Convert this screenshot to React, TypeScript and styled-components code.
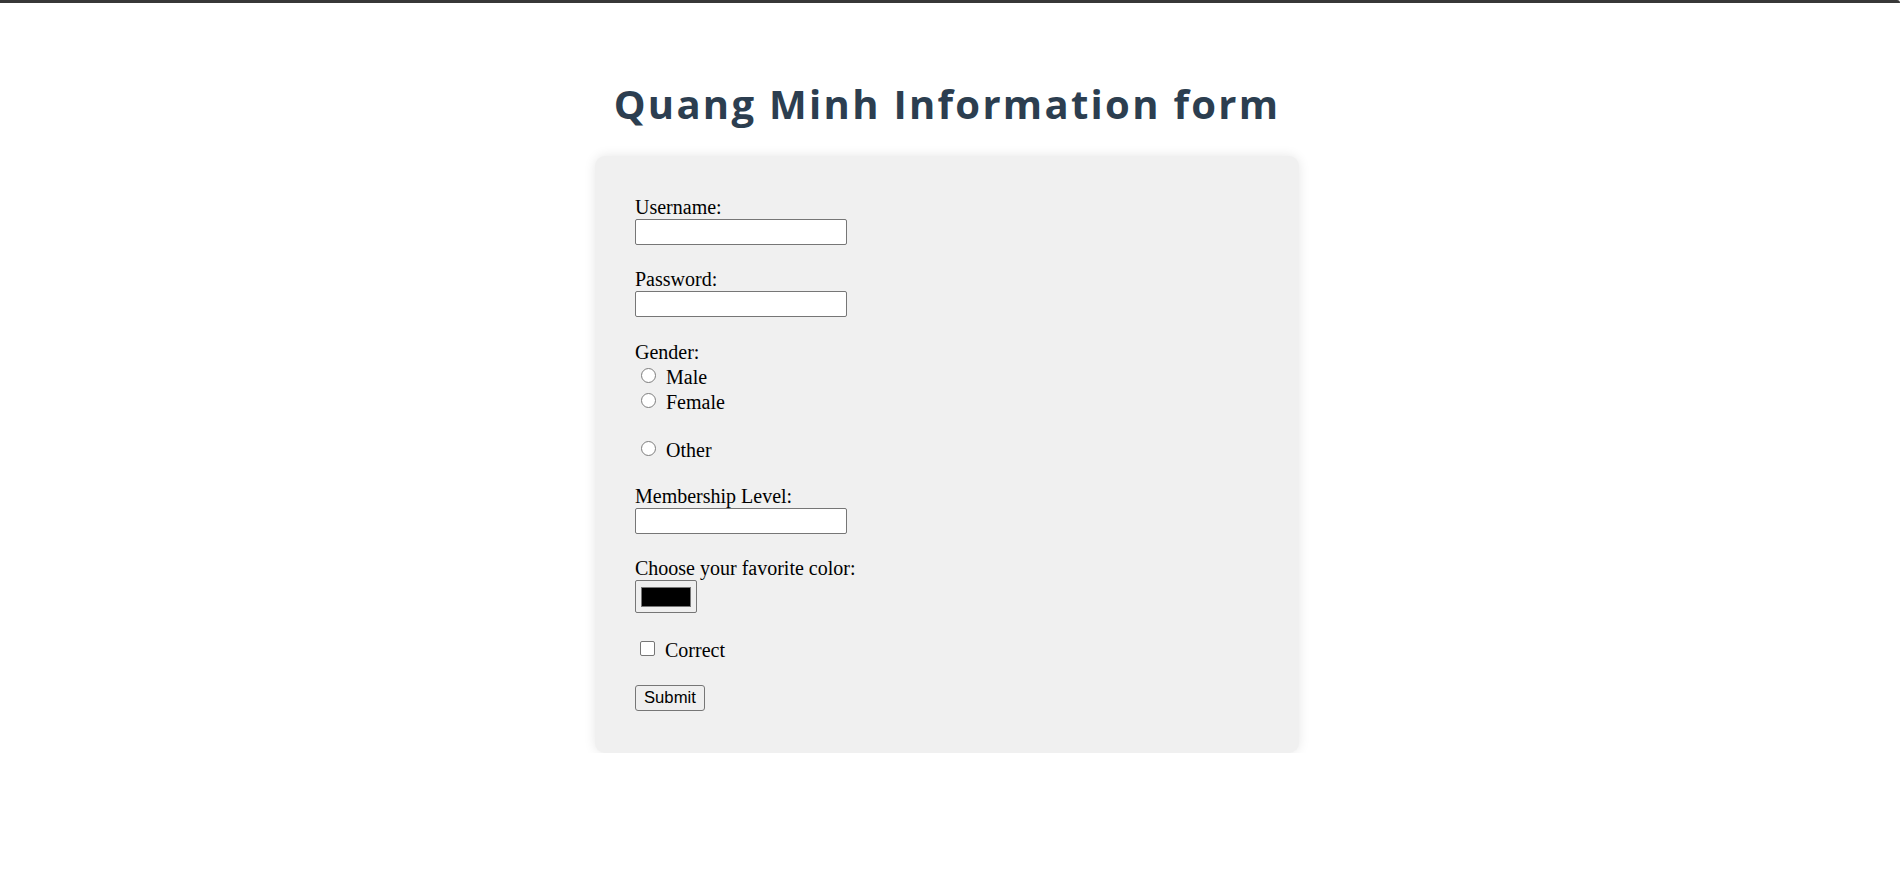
import React from "react";
import styled, { createGlobalStyle } from "styled-components";

const GlobalStyle = createGlobalStyle`
  html, body {
    margin: 0;
    padding: 0;
    background: #ffffff;
  }
  body {
    font-family: "Liberation Serif", "Times New Roman", serif;
    color: #000;
  }
`;

const TopBar = styled.div`
  height: 3px;
  background: #383838;
  border-top-right-radius: 6px;
`;

const Page = styled.main`
  display: flex;
  flex-direction: column;
  align-items: center;
  padding: 77px 6px 0 0;
`;

const Title = styled.h1`
  margin: 0;
  font-family: "Open Sans", Inter, sans-serif;
  font-weight: 700;
  font-size: 40px;
  line-height: 48px;
  letter-spacing: 2.3px;
  color: #2c3e50;
`;

const Card = styled.form`
  box-sizing: border-box;
  width: 704px;
  margin-top: 28px;
  padding: 40px 40px 42px;
  background: #f0f0f0;
  border-radius: 10px;
  box-shadow: 0 0 12px rgba(0, 0, 0, 0.1);
  display: flex;
  flex-direction: column;
  align-items: flex-start;
`;

const Field = styled.div<{ $gap?: number }>`
  display: flex;
  flex-direction: column;
  align-items: flex-start;
  margin-bottom: ${(p) => (p.$gap ?? 23)}px;
`;

const Label = styled.label`
  display: block;
  font-family: "Liberation Serif", "Times New Roman", serif;
  font-size: 20px;
  line-height: 23px;
  color: #000;
`;

const TextInput = styled.input`
  box-sizing: border-box;
  width: 212px;
  height: 26px;
  margin: 0;
  padding: 1px 3px;
  border: 1px solid #767676;
  border-radius: 2px;
  background: #ffffff;
  font-family: "Liberation Sans", Arial, sans-serif;
  font-size: 16px;
`;

const OptionRow = styled.label`
  display: flex;
  align-items: flex-start;
  height: 25px;
  font-family: "Liberation Serif", "Times New Roman", serif;
  font-size: 20px;
  line-height: 23px;
`;

const Radio = styled.input`
  appearance: none;
  -webkit-appearance: none;
  flex: none;
  box-sizing: border-box;
  width: 15px;
  height: 15px;
  margin: 4px 4px 0 6px;
  border: 1px solid #7d7d7d;
  border-radius: 50%;
  background: #ffffff;
`;

const Checkbox = styled.input`
  appearance: none;
  -webkit-appearance: none;
  flex: none;
  box-sizing: border-box;
  width: 15px;
  height: 15px;
  margin: 5px 4px 0 5px;
  border: 1px solid #767676;
  border-radius: 2px;
  background: #ffffff;
`;

const OptionText = styled.span<{ $drop?: number }>`
  padding-top: ${(p) => (p.$drop ?? 2)}px;
  margin-left: 6px;
`;

const BlankLine = styled.div`
  height: 23px;
`;

const ColorInput = styled.input`
  appearance: none;
  -webkit-appearance: none;
  box-sizing: border-box;
  width: 62px;
  height: 33px;
  margin: 0;
  padding: 6px 5px 5px;
  border: 1px solid #767676;
  border-radius: 2px;
  background: #efefef;
  cursor: pointer;
  &::-webkit-color-swatch-wrapper {
    padding: 0;
  }
  &::-webkit-color-swatch {
    border: 1px solid #777777;
    border-radius: 0;
  }
`;

const SubmitButton = styled.button`
  box-sizing: border-box;
  height: 26px;
  margin: 0;
  padding: 0 8px;
  border: 1px solid #767676;
  border-radius: 3px;
  background: #efefef;
  color: #000;
  font-family: "Liberation Sans", Arial, sans-serif;
  font-size: 16.67px;
  line-height: 20px;
`;

export default function App() {
  return (
    <>
      <GlobalStyle />
      <TopBar />
      <Page>
        <Title>Quang Minh Information form</Title>
        <Card onSubmit={(e) => e.preventDefault()}>
          <Field>
            <Label htmlFor="username">Username:</Label>
            <TextInput id="username" type="text" />
          </Field>
          <Field $gap={24}>
            <Label htmlFor="password">Password:</Label>
            <TextInput id="password" type="password" />
          </Field>
          <Field role="radiogroup">
            <Label as="span">Gender:</Label>
            <OptionRow>
              <Radio type="radio" name="gender" value="male" />
              <OptionText>Male</OptionText>
            </OptionRow>
            <OptionRow>
              <Radio type="radio" name="gender" value="female" />
              <OptionText>Female</OptionText>
            </OptionRow>
            <BlankLine />
            <OptionRow>
              <Radio type="radio" name="gender" value="other" />
              <OptionText>Other</OptionText>
            </OptionRow>
          </Field>
          <Field>
            <Label htmlFor="membership">Membership Level:</Label>
            <TextInput id="membership" type="text" />
          </Field>
          <Field>
            <Label htmlFor="color">Choose your favorite color:</Label>
            <ColorInput id="color" type="color" defaultValue="#000000" />
          </Field>
          <Field $gap={24}>
            <OptionRow>
              <Checkbox type="checkbox" />
              <OptionText $drop={3}>Correct</OptionText>
            </OptionRow>
          </Field>
          <SubmitButton type="submit">Submit</SubmitButton>
        </Card>
      </Page>
    </>
  );
}
